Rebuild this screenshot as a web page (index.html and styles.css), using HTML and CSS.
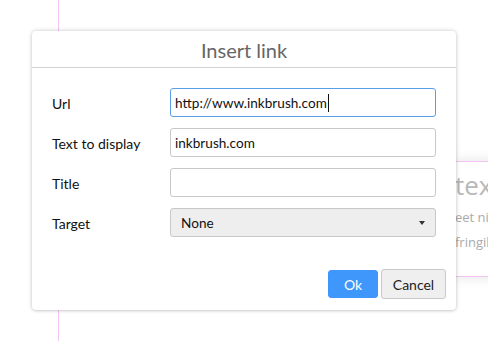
FILE: index.html
```html
<!DOCTYPE html>
<html>
<head>
<meta charset="utf-8">
<link rel="stylesheet" href="styles.css">
</head>
<body>
<div class="page">
  <div class="margin-rule"></div>
  <div class="bg-card">
    <div class="bg-heading">text</div>
    <div class="bg-line">eet nisi</div>
    <div class="bg-line">fringilla</div>
  </div>
  <div class="dialog">
    <div class="dialog-header">Insert link</div>
    <div class="dialog-body">
      <div class="row">
        <label class="label">Url</label>
        <div class="field focused"><span>http://www.inkbrush.com</span><span class="caret"></span></div>
      </div>
      <div class="row">
        <label class="label">Text to display</label>
        <div class="field"><span>inkbrush.com</span></div>
      </div>
      <div class="row">
        <label class="label">Title</label>
        <div class="field"></div>
      </div>
      <div class="row">
        <label class="label">Target</label>
        <div class="field select"><span class="select-value">None</span><span class="arrow"></span></div>
      </div>
    </div>
    <div class="dialog-footer">
      <button class="btn btn-primary">Ok</button>
      <button class="btn btn-cancel">Cancel</button>
    </div>
  </div>
</div>
</body>
</html>
```
FILE: styles.css
```css
html, body {
  margin: 0;
  padding: 0;
  background: #fff;
  overflow: hidden;
}
body {
  font-family: Lato, "Open Sans", sans-serif;
  color: #222;
}
.page {
  position: relative;
  width: 488px;
  height: 341px;
  overflow: hidden;
}
.margin-rule {
  position: absolute;
  left: 58px;
  top: 0;
  bottom: 0;
  width: 1px;
  background: #f4c2f4;
}
.bg-card {
  position: absolute;
  left: 455px;
  top: 161px;
  width: 200px;
  height: 116px;
  background: #fff;
  border-top: 1px solid #f4c2f4;
  border-bottom: 1px solid #f4c2f4;
  box-shadow: 0 0 12px rgba(0,0,0,0.12);
  box-sizing: border-box;
  padding-top: 7px;
}
.bg-heading {
  font-family: "Open Sans", sans-serif;
  font-size: 26px;
  line-height: 32px;
  color: #b8b8b8;
  margin-bottom: 4px;
}
.bg-line {
  font-family: "Open Sans", sans-serif;
  font-size: 13px;
  line-height: 25px;
  color: #aaa;
}
.dialog {
  position: absolute;
  left: 32px;
  top: 31px;
  width: 424px;
  height: 279px;
  box-sizing: border-box;
  background: #fff;
  border-radius: 4px;
  box-shadow: 0 0 4px rgba(0,0,0,0.22), 0 1px 2px rgba(0,0,0,0.08);
  display: flex;
  flex-direction: column;
}
.dialog-header {
  height: 37px;
  border-bottom: 1px solid #d2d2d2;
  display: flex;
  align-items: center;
  justify-content: center;
  font-size: 20px;
  color: #666;
  padding-top: 1px;
  box-sizing: border-box;
}
.dialog-body {
  padding: 20px 20px 0 20px;
  display: flex;
  flex-direction: column;
  gap: 11px;
}
.row {
  display: flex;
  align-items: center;
  height: 29px;
}
.label {
  width: 118px;
  font-size: 14px;
  color: #111;
  padding-top: 2px;
}
.field {
  width: 266px;
  height: 29px;
  box-sizing: border-box;
  border: 1px solid #c8c8c8;
  border-radius: 3px;
  display: flex;
  align-items: center;
  padding: 1px 4px 0;
  font-size: 13.6px;
  color: #111;
}
.field.focused {
  border-color: #5a9ee8;
}
.caret {
  width: 1px;
  height: 18px;
  background: #111;
  margin-left: 1px;
}
.field.select {
  background: #eee;
  padding: 1px 10px 0;
  justify-content: space-between;
}
.arrow {
  width: 0;
  height: 0;
  border-left: 3.5px solid transparent;
  border-right: 3.5px solid transparent;
  border-top: 4px solid #333;
}
.dialog-footer {
  margin-top: auto;
  display: flex;
  justify-content: flex-end;
  align-items: center;
  gap: 3px;
  padding: 0 10px 11px 0;
}
.btn {
  font-family: Lato, "Open Sans", sans-serif;
  font-size: 14px;
  color: #222;
  background: #efefef;
  border: 1px solid #c9c9c9;
  border-radius: 3px;
  height: 30px;
  padding: 1px 0 0;
}
.btn-cancel {
  width: 65px;
}
.btn-primary {
  background: #3f97fb;
  border-color: #3f97fb;
  color: #fff;
  width: 50px;
  height: 28px;
}
```
